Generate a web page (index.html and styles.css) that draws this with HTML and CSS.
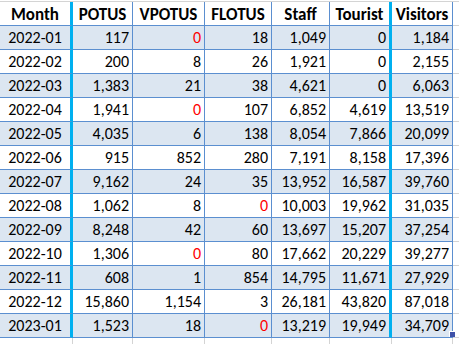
FILE: index.html
```html
<!DOCTYPE html>
<html lang="en">
<head>
<meta charset="utf-8">
<title>Visits</title>
<link rel="stylesheet" href="styles.css">
</head>
<body>
<div class="sheet">
  <div class="hd c-month">Month</div>
  <div class="hd">POTUS</div>
  <div class="hd">VPOTUS</div>
  <div class="hd">FLOTUS</div>
  <div class="hd">Staff</div>
  <div class="hd c-tour">Tourist</div>
  <div class="hd">Visitors</div>
  <div class="fill"></div>

  <div class="d c-month s">2022-01</div><div class="d n s">117</div><div class="d n s red">0</div><div class="d n s">18</div><div class="d n s">1,049</div><div class="d n s c-tour">0</div><div class="d n s">1,184</div><div class="fill"></div>
  <div class="d c-month">2022-02</div><div class="d n">200</div><div class="d n">8</div><div class="d n">26</div><div class="d n">1,921</div><div class="d n c-tour">0</div><div class="d n">2,155</div><div class="fill"></div>
  <div class="d c-month s">2022-03</div><div class="d n s">1,383</div><div class="d n s">21</div><div class="d n s">38</div><div class="d n s">4,621</div><div class="d n s c-tour">0</div><div class="d n s">6,063</div><div class="fill"></div>
  <div class="d c-month">2022-04</div><div class="d n">1,941</div><div class="d n red">0</div><div class="d n">107</div><div class="d n">6,852</div><div class="d n c-tour">4,619</div><div class="d n">13,519</div><div class="fill"></div>
  <div class="d c-month s">2022-05</div><div class="d n s">4,035</div><div class="d n s">6</div><div class="d n s">138</div><div class="d n s">8,054</div><div class="d n s c-tour">7,866</div><div class="d n s">20,099</div><div class="fill"></div>
  <div class="d c-month">2022-06</div><div class="d n">915</div><div class="d n">852</div><div class="d n">280</div><div class="d n">7,191</div><div class="d n c-tour">8,158</div><div class="d n">17,396</div><div class="fill"></div>
  <div class="d c-month s">2022-07</div><div class="d n s">9,162</div><div class="d n s">24</div><div class="d n s">35</div><div class="d n s">13,952</div><div class="d n s c-tour">16,587</div><div class="d n s">39,760</div><div class="fill"></div>
  <div class="d c-month">2022-08</div><div class="d n">1,062</div><div class="d n">8</div><div class="d n red">0</div><div class="d n">10,003</div><div class="d n c-tour">19,962</div><div class="d n">31,035</div><div class="fill"></div>
  <div class="d c-month s">2022-09</div><div class="d n s">8,248</div><div class="d n s">42</div><div class="d n s">60</div><div class="d n s">13,697</div><div class="d n s c-tour">15,207</div><div class="d n s">37,254</div><div class="fill"></div>
  <div class="d c-month">2022-10</div><div class="d n">1,306</div><div class="d n red">0</div><div class="d n">80</div><div class="d n">17,662</div><div class="d n c-tour">20,229</div><div class="d n">39,277</div><div class="fill"></div>
  <div class="d c-month s">2022-11</div><div class="d n s">608</div><div class="d n s">1</div><div class="d n s">854</div><div class="d n s">14,795</div><div class="d n s c-tour">11,671</div><div class="d n s">27,929</div><div class="fill"></div>
  <div class="d c-month">2022-12</div><div class="d n">15,860</div><div class="d n">1,154</div><div class="d n">3</div><div class="d n">26,181</div><div class="d n c-tour">43,820</div><div class="d n">87,018</div><div class="fill"></div>
  <div class="d c-month s">2023-01</div><div class="d n s">1,523</div><div class="d n s">18</div><div class="d n s red">0</div><div class="d n s">13,219</div><div class="d n s c-tour">19,949</div><div class="d n s last">34,709<span class="handle"></span></div><div class="fill"></div>

  <div class="g"></div><div class="g"></div><div class="g"></div><div class="g"></div><div class="g"></div><div class="g"></div><div class="g"></div><div class="g end"></div>
</div>
</body>
</html>
```
FILE: styles.css
```css
html, body {
  margin: 0;
  padding: 0;
  background: #ffffff;
}

.sheet {
  margin-top: 1px;
  border-top: 1px solid #d4d4d4;
  display: grid;
  grid-template-columns: 73px 60px 72px 67px 58px 62px 61px 6px;
  grid-template-rows: 24px repeat(13, 24px) 6px;
  font-family: Carlito, Calibri, Lato, "DejaVu Sans Condensed", sans-serif;
  font-size: 16px;
  color: #000000;
}

.hd,
.d {
  box-sizing: border-box;
  border-right: 1px solid #5b8fd0;
  border-bottom: 1px solid #5b8fd0;
  white-space: nowrap;
  overflow: hidden;
}

.hd {
  font-weight: 700;
  font-size: 17px;
  text-align: center;
  line-height: 23px;
  padding-top: 1px;
}

.d {
  line-height: 24px;
}

.n {
  text-align: right;
  padding-right: 3px;
}

.c-month {
  text-align: center;
  border-right: 3px solid #00b0f0;
}

.c-tour {
  border-right: 3px solid #00b0f0;
}

.s {
  background: #dce6f1;
}

.red {
  color: #ff0000;
}

.fill {
  box-sizing: border-box;
  border-bottom: 1px solid #d4d4d4;
}

.g {
  box-sizing: border-box;
  border-right: 1px solid #d4d4d4;
}

.g.end {
  border-right: none;
}

.last {
  position: relative;
  overflow: visible;
}

.handle {
  position: absolute;
  left: 57px;
  top: 17px;
  width: 6px;
  height: 6px;
  box-sizing: border-box;
  background: #3f51a8;
  border-left: 1px solid #ffffff;
  border-top: 1px solid #ffffff;
}
```
